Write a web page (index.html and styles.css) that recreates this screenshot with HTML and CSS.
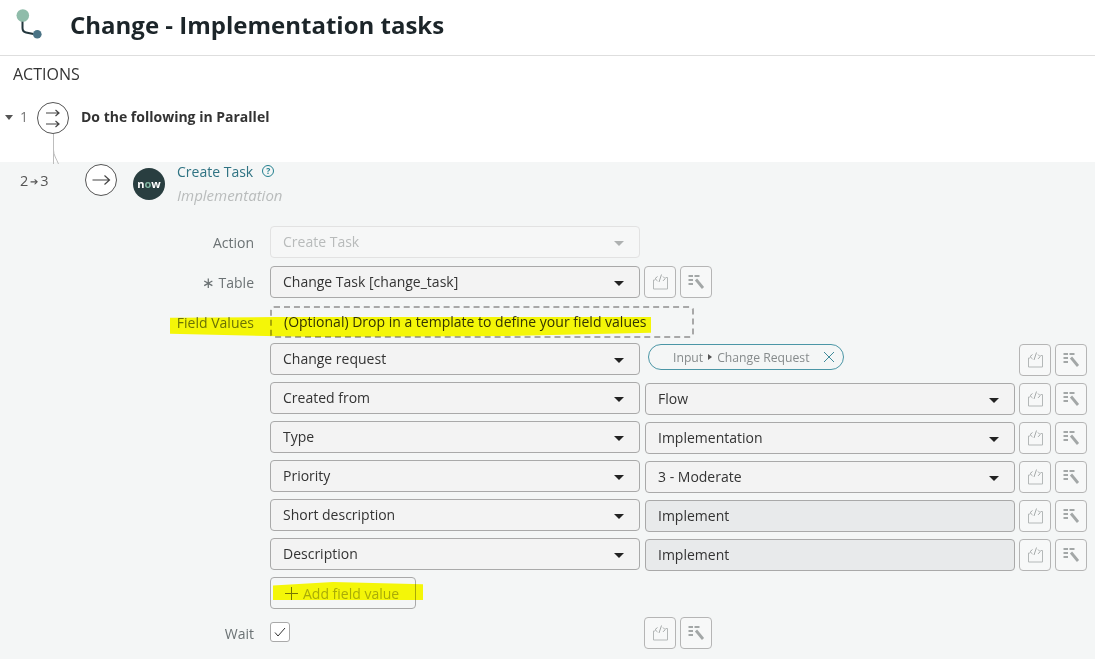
FILE: index.html
```html
<!DOCTYPE html>
<html lang="en">
<head>
<meta charset="utf-8">
<title>Change - Implementation tasks</title>
<link rel="stylesheet" href="styles.css">
</head>
<body>
<svg class="defs" width="0" height="0" aria-hidden="true">
  <symbol id="code" viewBox="0 0 18 18">
    <path d="M2.500 7v9h14v-11.500h-2M2.500 7h1.500" fill="none" stroke="#b4b8b8" stroke-width="1"/>
    <path d="M6.500 3.500l-2.500 2.200 2.500 2.200M8 9l2.500-7.500M12 3.500l2.200 2.200-2.200 2.200" fill="none" stroke="#a6aaaa" stroke-width="1"/>
  </symbol>
  <symbol id="tool" viewBox="0 0 18 18">
    <path d="M1.500 3h4.500M7.500 3h5M1.500 7h4.500M1.500 11h4.500" fill="none" stroke="#a3a7a7" stroke-width="2.200"/>
    <path d="M9 6.500l7 8.500" fill="none" stroke="#a3a7a7" stroke-width="2.800"/>
  </symbol>
  <symbol id="arrow" viewBox="0 0 32 32">
    <circle cx="16" cy="16" r="15.500" fill="#fff" stroke="#555" stroke-width="1"/>
    <path d="M7.500 16h16.500M19.500 11.500l5 4.500-5 4.500" fill="none" stroke="#444" stroke-width="1.200"/>
  </symbol>
</svg>

<header class="top">
  <svg class="flow-logo" width="30" height="40" viewBox="0 0 30 40">
    <path d="M8.500 20v8c0 3 1 4 3.500 4.500l7.500 1.500" fill="none" stroke="#23373d" stroke-width="2"/>
    <circle cx="8.800" cy="15.500" r="6.300" fill="#8fbcaa"/>
    <circle cx="23.300" cy="34.300" r="4.300" fill="#4a7385"/>
  </svg>
  <h1>Change - Implementation tasks</h1>
</header>

<main class="content">
  <h2 class="section">ACTIONS</h2>

  <section class="step">
    <span class="caret"></span>
    <span class="step-no">1</span>
    <svg class="circle" width="32" height="32" viewBox="0 0 32 32">
      <circle cx="16" cy="16" r="15.500" fill="#fff" stroke="#555"/>
      <path d="M9 11h13M18.500 8l3.500 3-3.500 3M9 22h13M18.500 19l3.500 3-3.500 3" fill="none" stroke="#444" stroke-width="1.200"/>
    </svg>
    <strong class="step-title">Do the following in Parallel</strong>
    <svg class="connector" width="12" height="30" viewBox="0 0 12 30">
      <path d="M1.500 0v30M1.500 16c0 5 3 9 5 14" fill="none" stroke="#bdbdbd"/>
    </svg>
  </section>

  <section class="panel">
    <div class="panel-head">
      <span class="sub-no">2<span class="sub-arrow">➔</span>3</span>
      <svg class="circle-2" width="32" height="32"><use href="#arrow"/></svg>
      <span class="now">n<span class="now-o">o</span>w</span>
      <div class="head-text">
        <div class="task-line"><span class="task">Create Task</span><span class="help">?</span></div>
        <em class="task-sub">Implementation</em>
      </div>
    </div>

    <div class="form">
      <div class="row row-action">
        <label class="lbl">Action</label>
        <div class="field disabled"><span>Create Task</span><i class="dd dd-light"></i></div>
      </div>
      <div class="row row-table">
        <label class="lbl"><span class="star">∗</span>Table</label>
        <div class="field"><span>Change Task [change_task]</span><i class="dd"></i></div>
        <div class="tools tools-near">
          <button class="ib"><svg width="18" height="18"><use href="#code"/></svg></button>
          <button class="ib"><svg width="18" height="18"><use href="#tool"/></svg></button>
        </div>
      </div>
      <div class="row row-values">
        <label class="lbl">Field Values</label>
        <div class="drop">(Optional) Drop in a template to define your field values</div>
      </div>

      <div class="row">
        <span class="lbl"></span>
        <div class="field"><span>Change request</span><i class="dd"></i></div>
        <div class="pill-cell">
          <div class="pill">
            <span>Input</span><b class="tri"></b><span>Change Request</span>
            <svg class="x" width="12" height="12" viewBox="0 0 12 12"><path d="M1 1l10 10M11 1L1 11" fill="none" stroke="#3f8a9a"/></svg>
          </div>
        </div>
        <div class="tools">
          <button class="ib"><svg width="18" height="18"><use href="#code"/></svg></button>
          <button class="ib"><svg width="18" height="18"><use href="#tool"/></svg></button>
        </div>
      </div>
      <div class="row">
        <span class="lbl"></span>
        <div class="field"><span>Created from</span><i class="dd"></i></div>
        <div class="field value"><span>Flow</span><i class="dd"></i></div>
        <div class="tools">
          <button class="ib"><svg width="18" height="18"><use href="#code"/></svg></button>
          <button class="ib"><svg width="18" height="18"><use href="#tool"/></svg></button>
        </div>
      </div>
      <div class="row">
        <span class="lbl"></span>
        <div class="field"><span>Type</span><i class="dd"></i></div>
        <div class="field value"><span>Implementation</span><i class="dd"></i></div>
        <div class="tools">
          <button class="ib"><svg width="18" height="18"><use href="#code"/></svg></button>
          <button class="ib"><svg width="18" height="18"><use href="#tool"/></svg></button>
        </div>
      </div>
      <div class="row">
        <span class="lbl"></span>
        <div class="field"><span>Priority</span><i class="dd"></i></div>
        <div class="field value"><span>3 - Moderate</span><i class="dd"></i></div>
        <div class="tools">
          <button class="ib"><svg width="18" height="18"><use href="#code"/></svg></button>
          <button class="ib"><svg width="18" height="18"><use href="#tool"/></svg></button>
        </div>
      </div>
      <div class="row">
        <span class="lbl"></span>
        <div class="field"><span>Short description</span><i class="dd"></i></div>
        <div class="field value text"><span>Implement</span></div>
        <div class="tools">
          <button class="ib"><svg width="18" height="18"><use href="#code"/></svg></button>
          <button class="ib"><svg width="18" height="18"><use href="#tool"/></svg></button>
        </div>
      </div>
      <div class="row">
        <span class="lbl"></span>
        <div class="field"><span>Description</span><i class="dd"></i></div>
        <div class="field value text"><span>Implement</span></div>
        <div class="tools">
          <button class="ib"><svg width="18" height="18"><use href="#code"/></svg></button>
          <button class="ib"><svg width="18" height="18"><use href="#tool"/></svg></button>
        </div>
      </div>
      <div class="row">
        <span class="lbl"></span>
        <button class="add"><span class="plus"></span>Add field value</button>
      </div>
      <div class="row row-wait">
        <label class="lbl">Wait</label>
        <div class="wait-cell">
          <span class="check"><svg width="14" height="14" viewBox="0 0 14 14"><path d="M2 7.500l3 3.500 7-8" fill="none" stroke="#333" stroke-width="1"/></svg></span>
        </div>
        <div class="tools tools-near">
          <button class="ib"><svg width="18" height="18"><use href="#code"/></svg></button>
          <button class="ib"><svg width="18" height="18"><use href="#tool"/></svg></button>
        </div>
      </div>
    </div>
  </section>
</main>

<div class="mark mark-1"></div>
<div class="mark mark-2"></div>
</body>
</html>
```

FILE: styles.css
```css
* { box-sizing: border-box; }
html, body { margin: 0; height: 100%; }
body {
  position: relative;
  width: 1095px;
  height: 659px;
  overflow: hidden;
  background: #fff;
  color: #2e2e2e;
  font-family: "Open Sans", "Liberation Sans", sans-serif;
  font-size: 14px;
}
.defs { position: absolute; }

.top {
  height: 56px;
  display: flex;
  align-items: flex-start;
  padding-left: 14px;
  border-bottom: 1px solid #dedede;
}
.flow-logo { flex: none; }
.top h1 {
  margin: 8px 0 0 26px;
  font-size: 24px;
  line-height: 33px;
  font-weight: 700;
  color: #1c2529;
}

.section {
  margin: 0;
  padding: 7px 0 0 13px;
  height: 36px;
  font-size: 16px;
  font-weight: 400;
  color: #333;
}

.step {
  position: relative;
  height: 70px;
  display: flex;
  align-items: flex-start;
  padding-top: 10px;
}
.caret {
  margin: 13px 0 0 5px;
  border: 4px solid transparent;
  border-top: 5px solid #555;
  border-bottom: 0;
}
.step-no { margin: 5px 0 0 7px; color: #777; width: 17px; }
.circle { flex: none; }
.step-title { margin: 5px 0 0 12px; font-size: 14px; font-weight: 700; color: #333; }
.connector { position: absolute; left: 52px; top: 42px; }

.panel {
  height: 497px;
  background: #f4f6f6;
}
.panel-head { height: 64px; display: flex; }
.sub-no { width: 85px; padding: 9px 0 0 20px; color: #555; font-size: 14.500px; flex: none; }
.sub-arrow { font-size: 10px; vertical-align: 1px; margin: 0 2px; }
.circle-2 { margin-top: 2px; flex: none; }
.now {
  margin: 6px 0 0 16px;
  width: 32px;
  height: 32px;
  border-radius: 50%;
  background: #293e40;
  color: #fff;
  font-size: 11px;
  font-weight: 700;
  line-height: 31px;
  text-align: center;
  flex: none;
}
.now-o { color: #81b5a1; }
.head-text { margin-left: 12px; }
.task-line { display: flex; align-items: center; height: 18px; }
.task { color: #2f7383; font-size: 14px; }
.help {
  margin-left: 9px;
  width: 12px;
  height: 12px;
  border: 1.200px solid #23808f;
  border-radius: 50%;
  color: #23808f;
  font-size: 8.500px;
  font-weight: 700;
  line-height: 10px;
  text-align: center;
}
.task-sub { display: block; margin-top: 5px; color: #b9bcbc; font-size: 15px; }

.row { display: flex; margin-bottom: 7px; }
.row-action { margin-bottom: 8px; }
.row-table { margin-bottom: 8px; }
.row-values { margin-bottom: 5px; }
.row-wait { margin: 8px 0 0; height: 32px; }

.lbl {
  width: 270px;
  height: 32px;
  flex: none;
  padding-right: 16px;
  text-align: right;
  line-height: 33px;
  color: #6b7274;
}
.star { margin-right: 4px; font-size: 15px; }

.field {
  position: relative;
  width: 370px;
  height: 32px;
  flex: none;
  padding-left: 12px;
  border: 1px solid #a9a9a9;
  border-radius: 4px;
  background: #f3f3f3;
  line-height: 29px;
  color: #333;
}
.field.disabled { border-color: #e2e2e2; background: #f6f7f7; color: #b8bbbb; }
.field.value { margin: 1px 4px -1px 5px; }
.field.text { background: #e8eaeb; }

.dd {
  position: absolute;
  right: 15px;
  top: 14px;
  border: 5px solid transparent;
  border-top: 5px solid #222;
  border-bottom: 0;
}
.dd-light { border-top-color: #aeb1b1; }

.drop {
  width: 424px;
  height: 32px;
  padding-left: 12px;
  border: 2px dashed #a8a8a8;
  border-radius: 4px;
  line-height: 27px;
  color: #333;
}

.pill-cell { width: 379px; flex: none; padding: 1px 0 0 8px; }
.pill {
  display: inline-flex;
  align-items: center;
  width: 196px;
  height: 26px;
  padding-left: 24px;
  border: 1px solid #4b96a6;
  border-radius: 13px;
  color: #868b8c;
  font-size: 12.200px;
}
.tri {
  margin: 0 5px;
  border: 3.500px solid transparent;
  border-left: 4px solid #555;
  border-right: 0;
}
.x { margin-left: 14px; }

.tools { display: flex; gap: 4px; flex: none; height: 32px; margin: 1px 0 -1px; }
.tools-near { margin: 0 0 0 4px; }
.ib {
  display: flex;
  align-items: center;
  justify-content: center;
  width: 32px;
  height: 32px;
  padding: 0;
  border: 1px solid #b5b5b5;
  border-radius: 4px;
  background: #f7f8f8;
}

.add {
  display: flex;
  align-items: center;
  width: 146px;
  height: 32px;
  padding: 0 0 0 14px;
  border: 1px solid #a9a9a9;
  border-radius: 4px;
  background: transparent;
  color: #a9acac;
  font: inherit;
}
.plus {
  width: 13px;
  height: 13px;
  margin-right: 5px;
  background:
    linear-gradient(#777, #777) center / 13px 1px no-repeat,
    linear-gradient(#777, #777) center / 1px 13px no-repeat;
}

.wait-cell { width: 370px; flex: none; padding-top: 5px; }
.check {
  display: flex;
  align-items: center;
  justify-content: center;
  width: 20px;
  height: 20px;
  border: 1px solid #a9a9a9;
  border-radius: 3px;
  background: #fff;
}

.mark {
  position: absolute;
  background: #ffff08;
  mix-blend-mode: multiply;
}
.mark-1 {
  left: 170px;
  top: 316px;
  width: 481px;
  height: 21px;
  clip-path: polygon(0 8%, 22% 5%, 100% 5%, 100% 80%, 70% 95%, 30% 100%, 0 85%);
}
.mark-2 {
  left: 273px;
  top: 582px;
  width: 150px;
  height: 18px;
  clip-path: polygon(0 20%, 40% 0, 100% 12%, 100% 100%, 0 100%);
}
```
